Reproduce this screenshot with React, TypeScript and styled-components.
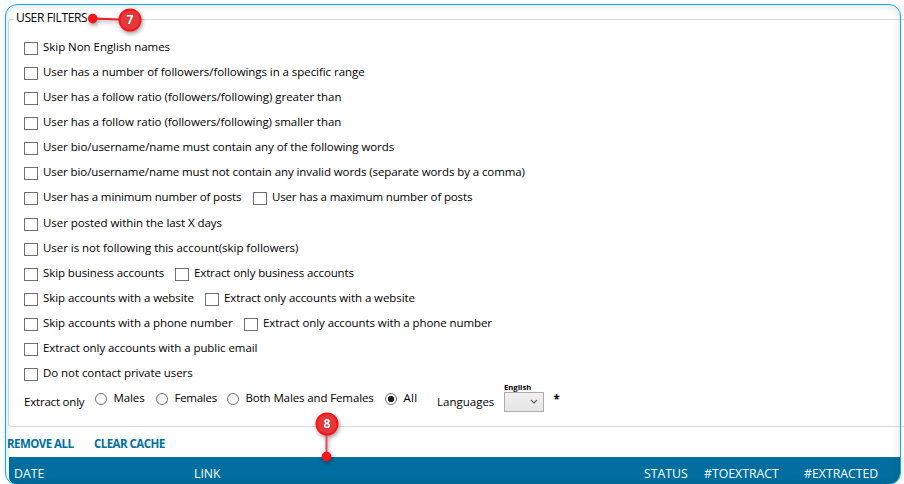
import React from 'react';
import styled, { createGlobalStyle } from 'styled-components';

const Global = createGlobalStyle`
  * { box-sizing: border-box; }
  html, body { margin: 0; height: 484px; overflow: hidden; background: #fff; }
`;

const Window = styled.main`
  position: relative;
  width: 904px;
  height: 484px;
  padding-top: 9px;
  overflow: hidden;
  background: #fff;
  color: #000;
  font: 11.5px/16px "Open Sans", sans-serif;
  white-space: nowrap;
`;

const Frame = styled.div`
  position: absolute;
  left: 5px;
  top: 4px;
  width: 896px;
  height: 481px;
  border: 1px solid #08aeea;
  border-radius: 12px;
  box-shadow: inset 0 0 10px rgba(0, 0, 0, 0.15), 0 0 5px rgba(0, 0, 0, 0.05);
  pointer-events: none;
`;

const FilterGroup = styled.fieldset`
  margin: 0 -4px 0 8px;
  padding: 9px 0 0 15px;
  height: 418px;
  min-width: 0;
  border: 1px solid #d5dce6;
  border-radius: 3px;
`;

const Legend = styled.legend`
  margin-left: -10px;
  padding: 0 1px 3px 2px;
  height: 20px;
  font-size: 12px;
  line-height: 17px;
  letter-spacing: -0.36px;
`;

const Text = styled.span<{ $spacing?: number }>`
  padding-top: 1px;
  letter-spacing: ${(p) => p.$spacing ?? 0}px;
`;

const FilterRow = styled.div`
  display: flex;
  height: 25.08px;
`;

const Option = styled.label<{ $width?: number }>`
  display: flex;
  width: ${(p) => (p.$width ? `${p.$width}px` : 'auto')};
  flex: none;
`;

const CheckBox = styled.input.attrs({ type: 'checkbox' })`
  appearance: none;
  flex: none;
  width: 14px;
  height: 13px;
  margin: 4px 5px 0 0;
  border: 1px solid #707070;
  background: #fff;
`;

const Radio = styled.input.attrs({ type: 'radio' })`
  appearance: none;
  flex: none;
  width: 12px;
  height: 12px;
  margin: 4px 6.5px 0 0;
  border: 1px solid #707070;
  border-radius: 50%;
  background: #fff;
  &:checked {
    background: radial-gradient(circle, #202020 0 2.8px, #fff 3.5px);
  }
`;

const GenderRow = styled.div`
  display: flex;
  height: 30px;
`;

const Caption = styled.span<{ $width: number; $spacing?: number }>`
  width: ${(p) => p.$width}px;
  padding-top: 5px;
  letter-spacing: ${(p) => p.$spacing ?? 0}px;
`;

const LanguageField = styled.div`
  display: flex;
  flex-direction: column;
  width: 40px;
  margin-top: -7px;
  font-size: 7.7px;
  font-weight: 700;
  line-height: 10px;
`;

const LanguageSelect = styled.button`
  display: flex;
  align-items: center;
  justify-content: flex-end;
  width: 40px;
  height: 20px;
  padding: 0 5px 2px 0;
  border: 1px solid #acacac;
  background: linear-gradient(#f0f0f0, #e5e5e5);
`;

const Required = styled.span`
  margin: 3px 0 0 9.5px;
  font-weight: 700;
`;

const Actions = styled.div`
  display: flex;
  height: 30px;
  padding: 9px 0 0 7px;
`;

const Action = styled.button<{ $width: number }>`
  height: 16px;
  width: ${(p) => p.$width}px;
  padding: 0;
  border: 0;
  background: none;
  color: #006f9f;
  font: 700 11.5px/16px "Open Sans", sans-serif;
  letter-spacing: -0.55px;
  text-align: left;
`;

const TableHeader = styled.div`
  display: grid;
  grid-template-columns: 180px 450px 60px 100px 1fr;
  align-items: center;
  margin: 0 4px 0 9px;
  padding: 6px 0 0 5px;
  height: 27px;
  border-radius: 0 0 11px 7px;
  background: #006f9f;
  color: #fff;
  font-size: 12.3px;
`;

const Pin = styled.svg`
  position: absolute;
  overflow: visible;
  filter: drop-shadow(1px 2px 2px rgba(0, 0, 0, 0.4));
`;

const PinSeven = styled(Pin)`
  left: 84px;
  top: 4px;
`;

const PinEight = styled(Pin)`
  left: 310px;
  top: 408px;
`;

const PinNumber = styled.text`
  fill: #fff;
  font: 700 12px "Open Sans", sans-serif;
  text-anchor: middle;
`;

type Item = { label: string; spacing: number; width?: number };

const filters: Item[][] = [
  [{ label: 'Skip Non English names', spacing: -0.04 }],
  [{ label: 'User has a number of followers/followings in a specific range', spacing: -0.06 }],
  [{ label: 'User has a follow ratio (followers/following) greater than', spacing: -0.045 }],
  [{ label: 'User has a follow ratio (followers/following) smaller than', spacing: -0.055 }],
  [{ label: 'User bio/username/name must contain any of the following words', spacing: -0.07 }],
  [{ label: 'User bio/username/name must not contain any invalid words (separate words by a comma)', spacing: -0.09 }],
  [
    { label: 'User has a minimum number of posts', spacing: -0.13, width: 229 },
    { label: 'User has a maximum number of posts', spacing: -0.15 },
  ],
  [{ label: 'User posted within the last X days', spacing: -0.05 }],
  [{ label: 'User is not following this account(skip followers)', spacing: -0.04 }],
  [
    { label: 'Skip business accounts', spacing: -0.1, width: 151 },
    { label: 'Extract only business accounts', spacing: -0.13 },
  ],
  [
    { label: 'Skip accounts with a website', spacing: -0.07, width: 181 },
    { label: 'Extract only accounts with a website', spacing: -0.07 },
  ],
  [
    { label: 'Skip accounts with a phone number', spacing: -0.075, width: 220 },
    { label: 'Extract only accounts with a phone number', spacing: -0.09 },
  ],
  [{ label: 'Extract only accounts with a public email', spacing: -0.06 }],
  [{ label: 'Do not contact private users', spacing: -0.06 }],
];

const genders: Item[] = [
  { label: 'Males', spacing: -0.1, width: 61 },
  { label: 'Females', spacing: -0.27, width: 71 },
  { label: 'Both Males and Females', spacing: -0.12, width: 158 },
  { label: 'All', spacing: 0.3, width: 52 },
];

export default function App() {
  return (
    <Window>
      <Global />
      <FilterGroup>
        <Legend>USER FILTERS</Legend>
        {filters.map((row) => (
          <FilterRow key={row[0].label}>
            {row.map((item) => (
              <Option key={item.label} $width={item.width}>
                <CheckBox />
                <Text $spacing={item.spacing}>{item.label}</Text>
              </Option>
            ))}
          </FilterRow>
        ))}
        <GenderRow>
          <Caption $width={71} $spacing={-0.2}>Extract only</Caption>
          {genders.map((item) => (
            <Option key={item.label} $width={item.width}>
              <Radio name="gender" defaultChecked={item.label === 'All'} />
              <Text $spacing={item.spacing}>{item.label}</Text>
            </Option>
          ))}
          <Caption $width={67}>Languages</Caption>
          <LanguageField>
            English
            <LanguageSelect>
              <svg width="8" height="5" viewBox="0 0 8 5" fill="none" stroke="#606060" strokeWidth="1.2">
                <path d="M1 1l3 3 3-3" />
              </svg>
            </LanguageSelect>
          </LanguageField>
          <Required>*</Required>
        </GenderRow>
      </FilterGroup>
      <Actions>
        <Action $width={87}>REMOVE ALL</Action>
        <Action $width={80}>CLEAR CACHE</Action>
      </Actions>
      <TableHeader>
        <span>DATE</span>
        <span>LINK</span>
        <span>STATUS</span>
        <span>#TOEXTRACT</span>
        <span>#EXTRACTED</span>
      </TableHeader>
      <Frame />
      <PinSeven width="64" height="36">
        <path d="M9 14.5L35 15.5" stroke="#f01c22" strokeWidth="2" />
        <circle cx="8.7" cy="14.6" r="4.8" fill="#fa1419" />
        <circle cx="46" cy="16" r="10.5" fill="#e13a3d" stroke="#fa1419" strokeWidth="2" />
        <PinNumber x="46" y="20">7</PinNumber>
      </PinSeven>
      <PinEight width="36" height="60">
        <path d="M16.5 27V49" stroke="#f8444a" strokeWidth="2" />
        <circle cx="16.5" cy="48.5" r="4.8" fill="#fa1419" />
        <circle cx="17" cy="16" r="10.5" fill="#e13a3d" stroke="#fa1419" strokeWidth="2" />
        <PinNumber x="17" y="20">8</PinNumber>
      </PinEight>
    </Window>
  );
}
